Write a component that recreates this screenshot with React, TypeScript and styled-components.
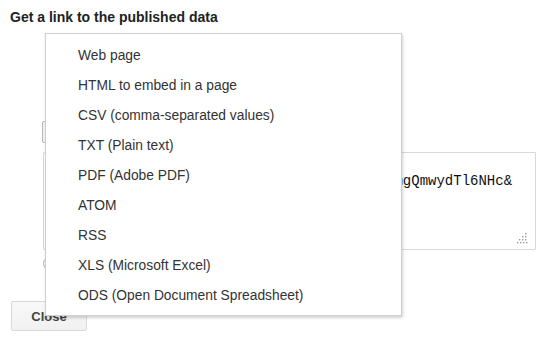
import React from "react";
import styled, { createGlobalStyle } from "styled-components";

const Global = createGlobalStyle`
  html, body { margin: 0; padding: 0; background: #fff; }
  body { font-family: Arial, "Liberation Sans", Helvetica, sans-serif; width: 550px; height: 343px; overflow: hidden; }
`;

const Page = styled.div`
  position: relative;
  padding: 9px 11px 0 10px;
  height: 343px;
  box-sizing: border-box;
`;

const Heading = styled.h2`
  margin: 0;
  font-size: 14px;
  line-height: 16px;
  font-weight: bold;
  color: #222;
`;

const Body = styled.div`
  display: flex;
  flex-direction: column;
  align-items: flex-start;
  padding-left: 32px;
  margin-top: 96px;
`;

const SelectBox = styled.div`
  width: 220px;
  height: 20px;
  border: 1px solid #b8b8b8;
  border-radius: 2px;
  background: #f4f4f4;
`;

const TextArea = styled.div`
  margin-top: 9px;
  margin-left: 1px;
  position: relative;
  width: 493px;
  height: 98px;
  box-sizing: border-box;
  border: 1px solid #d9d9d9;
  border-radius: 1px;
  padding: 4px 5px 3px 6px;
  font-family: "Courier New", "Liberation Mono", monospace;
  font-size: 14px;
  line-height: 16px;
  color: #111;
  white-space: pre;
  overflow: hidden;
`;

const Grip = styled.svg`
  position: absolute;
  right: 7px;
  bottom: 5px;
`;

const RadioRow = styled.div`
  margin-top: 7px;
  margin-left: 1px;
  display: flex;
  align-items: center;
`;

const Radio = styled.span`
  width: 11px;
  height: 11px;
  border: 1px solid #b0b0b0;
  border-radius: 50%;
  background: #fff;
`;

const CloseButton = styled.button`
  margin-top: 31px;
  margin-left: 1px;
  width: 76px;
  height: 30px;
  border: 1px solid #d9d9d9;
  border-radius: 2px;
  background: linear-gradient(#f8f8f8, #f1f1f1);
  font-family: Arial, "Liberation Sans", sans-serif;
  font-size: 13px;
  font-weight: bold;
  color: #444;
  padding: 0;
`;

const Menu = styled.ul`
  position: absolute;
  left: 45px;
  top: 33px;
  width: 357px;
  height: 283px;
  box-sizing: border-box;
  margin: 0;
  padding: 7px 0 4px;
  list-style: none;
  background: #fff;
  border: 1px solid #cfcfcf;
  box-shadow: 1px 2px 3px rgba(0, 0, 0, 0.18);
`;

const Item = styled.li`
  height: 30px;
  line-height: 30px;
  padding-left: 32px;
  font-size: 13.8px;
  color: #333;
  white-space: nowrap;
`;

const items = [
  "Web page",
  "HTML to embed in a page",
  "CSV (comma-separated values)",
  "TXT (Plain text)",
  "PDF (Adobe PDF)",
  "ATOM",
  "RSS",
  "XLS (Microsoft Excel)",
  "ODS (Open Document Spreadsheet)",
];

export default function App() {
  return (
    <>
      <Global />
      <Page>
        <Heading>Get a link to the published data</Heading>
        <Body>
          <SelectBox />
          <TextArea>
            {"https://docs.google.com/spreadsheet/\npub?hl=en_US&key=0AmZr8dVHGJx1dFRtbTFhYkLmgQmwydTl6NHc&"}
            <Grip width="11" height="11" viewBox="0 0 11 11">
              <g fill="#9a9a9a">
                <rect x="8" y="0" width="1.4" height="1.4" />
                <rect x="5" y="3" width="1.4" height="1.4" />
                <rect x="8" y="3" width="1.4" height="1.4" />
                <rect x="2" y="6" width="1.4" height="1.4" />
                <rect x="5" y="6" width="1.4" height="1.4" />
                <rect x="8" y="6" width="1.4" height="1.4" />
                <rect x="0" y="9" width="1.4" height="1.4" />
                <rect x="3" y="9" width="1.4" height="1.4" />
                <rect x="6" y="9" width="1.4" height="1.4" />
                <rect x="9" y="9" width="1.4" height="1.4" />
              </g>
            </Grip>
          </TextArea>
          <RadioRow>
            <Radio />
          </RadioRow>
        </Body>
        <CloseButton>Close</CloseButton>
        <Menu>
          {items.map((t) => (
            <Item key={t}>{t}</Item>
          ))}
        </Menu>
      </Page>
    </>
  );
}
